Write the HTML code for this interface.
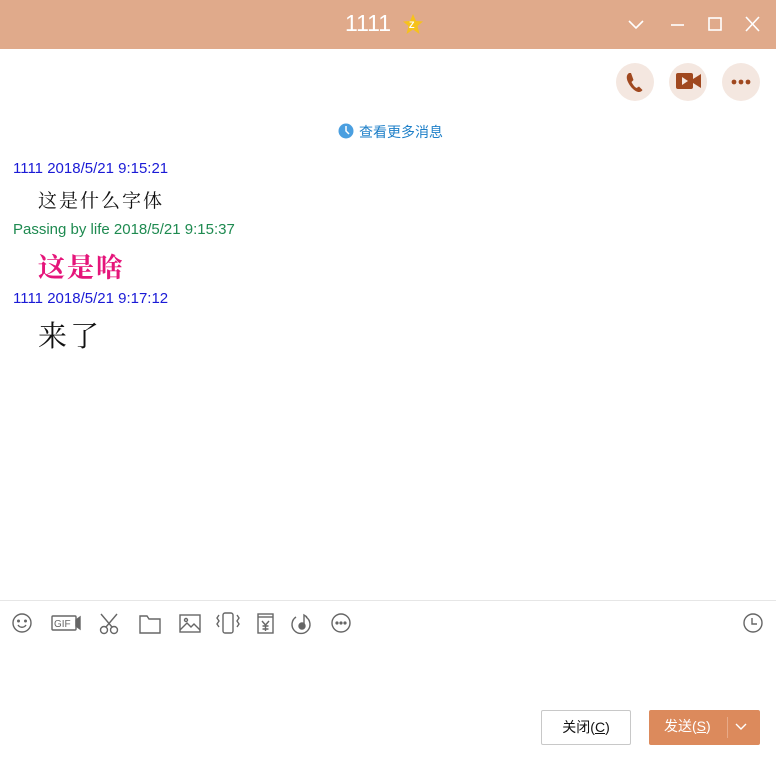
<!DOCTYPE html>
<html><head><meta charset="utf-8"><style>
*{margin:0;padding:0;box-sizing:border-box}
body{width:776px;height:762px;background:#fff;position:relative;overflow:hidden;font-family:"Liberation Sans","Noto Sans CJK SC",sans-serif}
.title{position:absolute;left:0;top:0;width:776px;height:49px;background:#e0aa8b}
.abs{position:absolute}
.circ{position:absolute;top:63px;width:38px;height:38px;border-radius:19px;background:#f4e7e0}
.meta{position:absolute;left:13px;font-size:15px}
.btn{position:absolute;top:710px;height:35px;font-size:14px;text-align:center;line-height:33px}
svg{position:absolute}
</style></head><body>
<div class="title"></div>
<div class="abs" style="left:345px;top:10px;color:#fff;font-size:23px">1111</div>
<svg style="left:402px;top:13px" width="22" height="22" viewBox="0 0 22 22"><polygon points="11,1 14,8 21,8.5 15.5,13 17.5,21 11,16.5 4.5,21 6.5,13 1,8.5 8,8" fill="#f6c21b"/><text x="7" y="15" font-size="9" fill="#fff" font-family="Liberation Sans" font-weight="bold">Z</text></svg>
<svg style="left:626px;top:14px" width="140" height="22" viewBox="0 0 140 22" stroke="#fff" stroke-width="1.6" fill="none"><path d="M3 7l7 7 7-7"/><path d="M45 11h13"/><rect x="83" y="4" width="12" height="12"/><path d="M120 3l13 14M133 3l-13 14"/></svg>
<div class="circ" style="left:616px"></div><div class="circ" style="left:669px"></div><div class="circ" style="left:722px"></div>
<svg style="left:625px;top:71px" width="20" height="22" viewBox="0 0 20 22"><path d="M4 2c-3 2-3 6 0 11s7 8 10 8c1.5 0 3-1 3.5-2l-3.5-3.5-2.5 1.5c-2-1-4-4-5-6l2-2L6 2z" fill="#a0481f"/></svg>
<svg style="left:676px;top:72px" width="26" height="18" viewBox="0 0 26 18"><rect x="0" y="1" width="17" height="16" rx="2" fill="#a0481f"/><path d="M17 7l8-5v14l-8-5z" fill="#a0481f"/><path d="M6 5l6 4-6 4z" fill="#f4e7e0"/></svg>
<svg style="left:731px;top:79px" width="20" height="6"><circle cx="3" cy="3" r="2.4" fill="#a0481f"/><circle cx="10" cy="3" r="2.4" fill="#a0481f"/><circle cx="17" cy="3" r="2.4" fill="#a0481f"/></svg>
<svg style="left:338px;top:123px" width="16" height="16"><circle cx="8" cy="8" r="7.5" fill="#4a9fe0"/><path d="M8 3v5l3 3" stroke="#fff" stroke-width="1.5" fill="none"/></svg>
<div class="abs" style="left:359px;top:122px;color:#1d7fc8;font-size:14px">查看更多消息</div>
<div class="meta" style="top:160px;color:#1a1ad6">1111 2018/5/21 9:15:21</div>
<div class="abs" style="left:38px;top:186px;font-size:19px;font-family:'Noto Serif CJK SC',serif;letter-spacing:2px;color:#111">这是什么字体</div>
<div class="meta" style="top:221px;color:#1e8a50">Passing by life 2018/5/21 9:15:37</div>
<div class="abs" style="left:38px;top:246px;font-size:27px;font-family:'Noto Serif CJK SC',serif;font-weight:bold;color:#e5157a;letter-spacing:2px">这是啥</div>
<div class="meta" style="top:290px;color:#1a1ad6">1111 2018/5/21 9:17:12</div>
<div class="abs" style="left:38px;top:314px;font-size:29px;font-family:'Noto Serif CJK SC',serif;color:#111;letter-spacing:3px">来了</div>
<div class="abs" style="left:0;top:600px;width:776px;height:1px;background:#e6e6e6"></div>
<svg style="left:10px;top:611px" width="360" height="26" viewBox="0 0 360 26" stroke="#666" stroke-width="1.4" fill="none">
<circle cx="12" cy="12" r="9"/><circle cx="8.5" cy="10" r=".8" fill="#666"/><circle cx="15.5" cy="10" r=".8" fill="#666"/><path d="M8 14c2 3 6 3 8 0"/>
<rect x="42" y="5" width="24" height="14" rx="1"/><text x="44" y="16" font-size="10" fill="#666" stroke="none" font-family="Liberation Sans">GIF</text><path d="M66 9l4-3v12l-4-3z" fill="#666"/>
<circle cx="94" cy="19" r="3.5"/><circle cx="104" cy="19" r="3.5"/><path d="M96 16l11-13M102 16L91 3"/>
<path d="M130 5h7l2 3h11v14h-20z"/>
<rect x="170" y="4" width="20" height="17"/><circle cx="176" cy="9" r="1.5"/><path d="M170 19l7-7 4 4 3-3 6 6"/>
<rect x="213" y="2" width="10" height="20" rx="2"/><path d="M209 4l-2 3 2 3-2 3 2 3M227 4l2 3-2 3 2 3-2 3"/>
<rect x="248" y="3" width="15" height="19"/><path d="M248 6h15"/><path d="M252 10l3.5 4 3.5-4M255.5 14v6M252.5 15h6M252.5 18h6"/>
<path d="M286 6a9 9 0 1 0 10 0"/><circle cx="292" cy="15" r="3" fill="#666"/><path d="M294 15V4l3 2"/>
<circle cx="331" cy="12" r="9"/><circle cx="327" cy="12" r=".9" fill="#666"/><circle cx="331" cy="12" r=".9" fill="#666"/><circle cx="335" cy="12" r=".9" fill="#666"/>
</svg>
<svg style="left:742px;top:612px" width="22" height="22" stroke="#666" stroke-width="1.4" fill="none"><circle cx="11" cy="11" r="9"/><path d="M10 6v6h5"/></svg>
<div class="btn" style="left:541px;width:90px;border:1px solid #c8c8c8;border-radius:2px;color:#111">关闭(<u>C</u>)</div>
<div class="btn" style="left:649px;width:111px;background:#dc8a5c;border-radius:2px;color:#fff"><span style="position:absolute;left:15px">发送(<u>S</u>)</span><span style="position:absolute;left:78px;top:7px;width:1px;height:21px;background:#e8aa88"></span><svg style="left:86px;top:13px" width="12" height="8"><path d="M1 1l5 5 5-5" stroke="#fff" stroke-width="1.4" fill="none"/></svg></div>
</body></html>
